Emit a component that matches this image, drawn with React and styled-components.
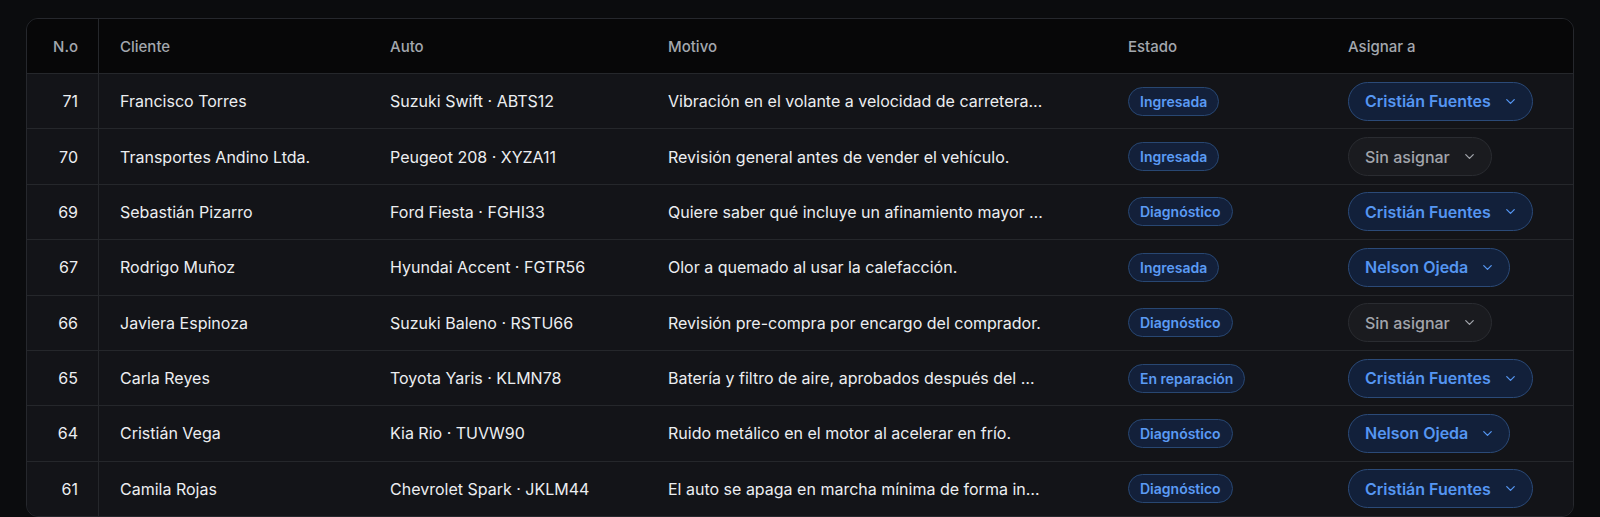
import React from 'react'
import styled, { createGlobalStyle } from 'styled-components'
import { ChevronDown } from 'lucide-react'

const orders = [
  { id: 71, client: 'Francisco Torres', car: 'Suzuki Swift · ABTS12', reason: 'Vibración en el volante a velocidad de carretera sobre 90 km/h.', status: 'Ingresada', assignee: 'Cristián Fuentes' },
  { id: 70, client: 'Transportes Andino Ltda.', car: 'Peugeot 208 · XYZA11', reason: 'Revisión general antes de vender el vehículo.', status: 'Ingresada', assignee: null },
  { id: 69, client: 'Sebastián Pizarro', car: 'Ford Fiesta · FGHI33', reason: 'Quiere saber qué incluye un afinamiento mayor y su costo.', status: 'Diagnóstico', assignee: 'Cristián Fuentes' },
  { id: 67, client: 'Rodrigo Muñoz', car: 'Hyundai Accent · FGTR56', reason: 'Olor a quemado al usar la calefacción.', status: 'Ingresada', assignee: 'Nelson Ojeda' },
  { id: 66, client: 'Javiera Espinoza', car: 'Suzuki Baleno · RSTU66', reason: 'Revisión pre-compra por encargo del comprador.', status: 'Diagnóstico', assignee: null },
  { id: 65, client: 'Carla Reyes', car: 'Toyota Yaris · KLMN78', reason: 'Batería y filtro de aire, aprobados después del diagnóstico.', status: 'En reparación', assignee: 'Cristián Fuentes' },
  { id: 64, client: 'Cristián Vega', car: 'Kia Rio · TUVW90', reason: 'Ruido metálico en el motor al acelerar en frío.', status: 'Diagnóstico', assignee: 'Nelson Ojeda' },
  { id: 61, client: 'Camila Rojas', car: 'Chevrolet Spark · JKLM44', reason: 'El auto se apaga en marcha mínima de forma intermitente.', status: 'Diagnóstico', assignee: 'Cristián Fuentes' },
]

const GlobalStyle = createGlobalStyle`
  * { box-sizing: border-box; }
  html, body {
    margin: 0;
    background: #0b0c0e;
    font-family: Inter, "Noto Sans", sans-serif;
    overflow: hidden;
  }
`

const App = () => {
  return (
    <React.Fragment>
      <GlobalStyle />
      <Page>
        <Table>
          <HeaderRow>
            <NumCell header>N.o</NumCell>
            <HeaderCell>Cliente</HeaderCell>
            <HeaderCell>Auto</HeaderCell>
            <HeaderCell>Motivo</HeaderCell>
            <HeaderCell>Estado</HeaderCell>
            <HeaderCell>Asignar a</HeaderCell>
          </HeaderRow>
          {orders.map(order => (
            <Row key={order.id}>
              <NumCell>{order.id}</NumCell>
              <Cell>{order.client}</Cell>
              <Cell>{order.car}</Cell>
              <Cell><Reason>{order.reason}</Reason></Cell>
              <Cell><Badge>{order.status}</Badge></Cell>
              <Cell>
                <Assign assigned={!!order.assignee}>
                  {order.assignee || 'Sin asignar'}
                  <ChevronDown size={15} strokeWidth={2} />
                </Assign>
              </Cell>
            </Row>
          ))}
        </Table>
      </Page>
    </React.Fragment>
  )
}

const Page = styled.div`
  padding: 18px 26px 0 26px;
`

const Table = styled.div`
  border: 1px solid #26282d;
  border-radius: 12px;
  overflow: hidden;
  background: #131418;
`

const columns = '72px 270px 278px 460px 220px 1fr'

const HeaderRow = styled.div`
  display: grid;
  grid-template-columns: ${columns};
  height: 54px;
  background: #070708;
  color: #a3a7ae;
  font-size: 15px;
  font-weight: 500;
`

const Row = styled.div`
  display: grid;
  grid-template-columns: ${columns};
  height: 55.375px;
  border-top: 1px solid #25272b;
  background: #131418;
  color: #eceef1;
  font-size: 16px;
`

const Cell = styled.div`
  display: flex;
  align-items: center;
  padding-left: 21px;
  white-space: nowrap;
  min-width: 0;
`

const HeaderCell = styled(Cell)``

const NumCell = styled.div`
  display: flex;
  align-items: center;
  justify-content: flex-end;
  padding-right: 20px;
  border-right: 1px solid #25272b;
  color: ${props => (props.header ? '#a3a7ae' : '#eceef1')};
`

const Reason = styled.span`
  max-width: 376px;
  overflow: hidden;
  text-overflow: ellipsis;
  white-space: nowrap;
`

const Badge = styled.span`
  display: inline-flex;
  align-items: center;
  height: 29px;
  padding: 0 11px;
  border-radius: 999px;
  border: 1px solid #284772;
  background: #13203a;
  color: #5b9bf4;
  font-size: 14px;
  font-weight: 600;
`

const Assign = styled.div`
  display: inline-flex;
  align-items: center;
  gap: 12px;
  height: 39px;
  padding: 0 14px 0 16px;
  border-radius: 999px;
  border: 1px solid ${props => (props.assigned ? '#2b4a78' : '#2a2c31')};
  background: ${props => (props.assigned ? '#12203a' : '#1a1b1f')};
  color: ${props => (props.assigned ? '#5596f2' : '#a2a5ac')};
  font-size: 16px;
  font-weight: ${props => (props.assigned ? 600 : 500)};

  svg {
    color: ${props => (props.assigned ? '#5596f2' : '#a2a5ac')};
  }
`

export default App
